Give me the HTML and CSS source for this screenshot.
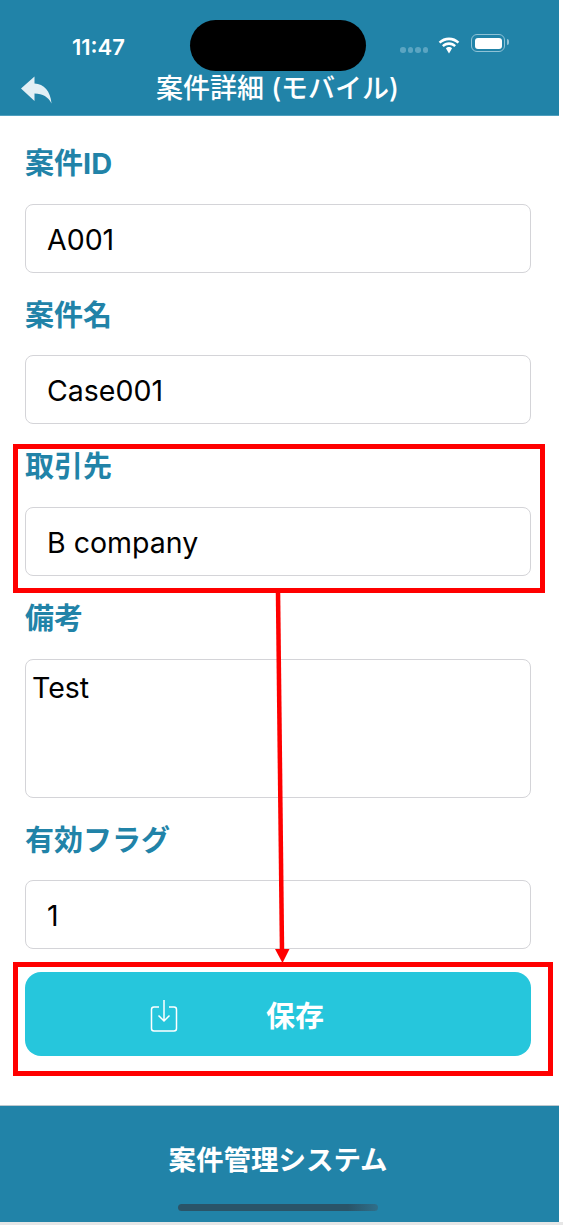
FILE: index.html
```html
<!DOCTYPE html>
<html lang="ja">
<head>
<meta charset="UTF-8">
<title>案件詳細</title>
<link rel="stylesheet" href="styles.css">
</head>
<body>
    <div id="screen">
        <div id="header">
            <div id="status-bar">
                <span id="clock">11:47</span>
                <div id="island"></div>
                <div id="signal"><i></i><i></i><i></i><i></i></div>
                <svg id="wifi" width="24" height="17" viewBox="0 0 24 17">
                    <path d="M12 3.200c3.300 0 6.300 1.300 8.600 3.400l1.700-1.900C19.600 2.100 16 .5 12 .5S4.400 2.100 1.700 4.700l1.700 1.900C5.700 4.500 8.700 3.200 12 3.200z" fill="#fff"/>
                    <path d="M12 8c2 0 3.900.8 5.300 2.100l1.700-1.900C17.200 6.400 14.700 5.300 12 5.300S6.800 6.400 5 8.200l1.700 1.900C8.100 8.800 10 8 12 8z" fill="#fff"/>
                    <path d="M12 10.100c-1.200 0-2.300.5-3.100 1.200L12 16.500l3.100-5.200c-.8-.7-1.900-1.200-3.100-1.200z" fill="#fff"/>
                </svg>
                <div id="battery"><div id="battery-level"></div></div>
            </div>
            <div id="title-bar">
                <svg id="back" width="32" height="28" viewBox="0 0 32 28">
                    <path d="M1 12.500 14.500.5v7C24 8 30.500 15 31.500 27.500 28 20.500 23 18 14.500 17.500v7.500z" fill="#e2eff5"/>
                </svg>
                <h1>案件詳細 (モバイル)</h1>
            </div>
        </div>
        <div id="main">
            <div class="field">
                <label>案件ID</label>
                <input type="text" value="A001">
            </div>
            <div class="field">
                <label>案件名</label>
                <input type="text" value="Case001">
            </div>
            <div class="field">
                <label>取引先</label>
                <input type="text" value="B company">
            </div>
            <div class="field">
                <label>備考</label>
                <textarea>Test</textarea>
            </div>
            <div class="field">
                <label>有効フラグ</label>
                <input type="text" value="1">
            </div>
            <button id="save-button" type="button">
                <svg width="28" height="34" viewBox="0 0 28 34" fill="none" stroke="#fff" stroke-width="1.500">
                    <path d="M9 8H4a2.500 2.500 0 0 0-2.500 2.500v19A2.500 2.500 0 0 0 4 32h20a2.500 2.500 0 0 0 2.500-2.500v-19A2.500 2.500 0 0 0 24 8h-5"/>
                    <path d="M14 1v21M8.500 16.500 14 22l5.500-5.500"/>
                </svg>
                <span>保存</span>
            </button>
        </div>
        <div id="footer">
            <p>案件管理システム</p>
            <div id="home-bar"></div>
        </div>
        <div id="bottom-strip"></div>

        <!-- red annotations drawn over the screenshot -->
        <div class="mark" id="mark-client"></div>
        <div class="mark" id="mark-save"></div>
        <svg id="mark-arrow" width="30" height="375" viewBox="0 0 30 375">
            <path d="M6 0 10 358" stroke="#f00" stroke-width="4.500" fill="none"/>
            <path d="M3 357H17.500L10.500 371z" fill="#f00"/>
        </svg>
    </div>
</body>
</html>
```

FILE: styles.css
```css
* {
margin: 0;
padding: 0;
box-sizing: border-box;
}

html, body {
background-color: #fff;
height: 1226px;
overflow: hidden;
font-family: Inter, "Noto Sans CJK JP", sans-serif;
}

#screen {
position: relative;
width: 563px;
height: 1226px;
display: flex;
flex-direction: column;
}

#header {
width: 559px;
height: 116px;
background-color: #2183a8;
border-bottom: 1px solid #4f9fbe;
color: #fff;
}

#status-bar {
display: flex;
align-items: center;
height: 51px;
margin-top: 20px;
padding-left: 72px;
}

#clock {
width: 118px;
font-size: 22px;
font-weight: 600;
position: relative;
top: 1px;
}

#island {
width: 176px;
height: 51px;
border-radius: 26px;
background-color: #000;
}

#signal {
display: flex;
gap: 2px;
margin-left: 34px;
margin-top: 9px;
}

#signal i {
width: 5.500px;
height: 5.500px;
border-radius: 50%;
background-color: #5ba5c2;
}

#wifi {
margin-left: 9px;
margin-top: -1px;
}

#battery {
position: relative;
width: 34px;
height: 18px;
margin-left: 10px;
margin-top: -5px;
padding: 2.500px;
border: 1.500px solid #8fc2d6;
border-radius: 6px;
}

#battery::after {
content: "";
position: absolute;
right: -5px;
top: 4px;
width: 2px;
height: 6px;
border-radius: 0 2px 2px 0;
background-color: #8fc2d6;
}

#battery-level {
height: 100%;
border-radius: 3px;
background-color: #fff;
}

#title-bar {
display: grid;
grid-template-columns: 1fr auto 1fr;
align-items: center;
height: 36px;
}

#back {
margin-left: 20px;
margin-top: 1px;
}

#title-bar h1 {
margin-left: -4px;
font-size: 27px;
font-weight: 500;
line-height: 36px;
}

#main {
width: 559px;
padding: 28px 28px 0 25px;
display: flex;
flex-direction: column;
}

.field {
margin-bottom: 23.200px;
}

label {
display: block;
height: 40px;
margin-bottom: 19.500px;
font-size: 29px;
font-weight: 700;
line-height: 40px;
color: #2183a8;
}

input, textarea {
display: block;
width: 100%;
border: 1.500px solid #d4d4d8;
border-radius: 8px;
font-family: Inter, "Noto Sans CJK JP", sans-serif;
font-size: 28.500px;
color: #000;
background-color: #fff;
outline: 0;
}

input {
height: 69px;
padding: 2px 21px 0;
}

textarea {
height: 139px;
padding: 10px 6px;
resize: none;
overflow: hidden;
line-height: 36px;
}

#save-button {
display: flex;
align-items: center;
height: 84px;
width: 506px;
padding-left: 125px;
border: 0;
border-radius: 16px;
background-color: #26c6dc;
color: #fff;
font-family: Inter, "Noto Sans CJK JP", sans-serif;
font-size: 29px;
font-weight: 700;
}

#save-button svg {
margin-right: 88px;
margin-top: 4px;
}

#footer {
width: 559px;
height: 117px;
margin-top: 49px;
background-color: #2183a8;
border-top: 1px solid #bcc8cf;
color: #fff;
text-align: center;
}

#footer p {
padding-top: 34px;
margin-right: 3px;
font-size: 27.500px;
font-weight: 700;
line-height: 40px;
}

#home-bar {
width: 200px;
height: 7px;
margin: 24px 0 0 178px;
border-radius: 4px;
background: linear-gradient(to right, #2a5468 85%, #2f6f8a 100%);
}

#bottom-strip {
height: 3px;
background-color: #e6e6e6;
}

.mark {
position: absolute;
border: 5px solid #f00;
}

#mark-client {
left: 13px;
top: 444px;
width: 532px;
height: 149px;
}

#mark-save {
left: 13px;
top: 962px;
width: 540px;
height: 114px;
}

#mark-arrow {
position: absolute;
left: 272px;
top: 592px;
}
```
